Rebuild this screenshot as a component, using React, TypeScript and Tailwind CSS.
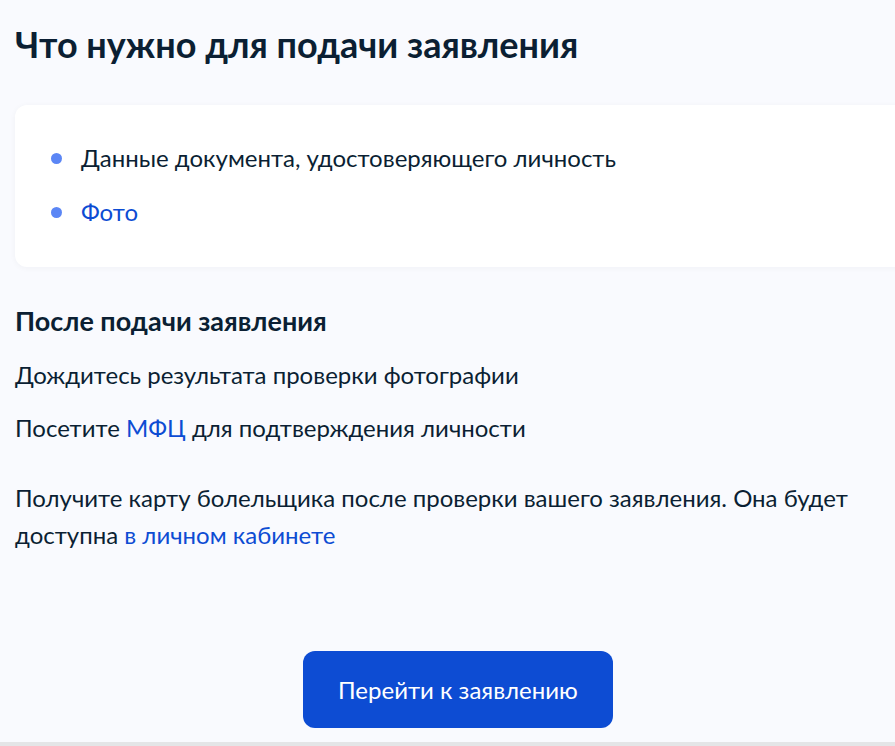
const items = [
  { text: "Данные документа, удостоверяющего личность", link: false },
  { text: "Фото", link: true },
];

export default function App() {
  return (
    <div
      className="w-[895px] h-[746px] overflow-hidden bg-[#f9fafe] text-[#0b1f33] flex flex-col"
      style={{ fontFamily: "Lato, 'Noto Sans', sans-serif" }}
    >
      <div className="flex-1 px-[15px]">
        <h2 className="pt-[22px] text-[36px] leading-[44px] font-bold">
          Что нужно для подачи заявления
        </h2>

        <div className="mt-[39px] w-[920px] bg-white rounded-xl shadow-[0_1px_6px_rgba(11,31,51,0.04)] pt-[38px] pb-[40px] pl-[36px]">
          <ul className="flex flex-col gap-6">
            {items.map((item) => (
              <li key={item.text} className="flex items-center gap-[19px] text-[24px] leading-[30px]">
                <span className="w-[11px] h-[11px] rounded-full bg-[#5b86f5] shrink-0" />
                <span className={item.link ? "text-[#0d4cd3]" : ""}>{item.text}</span>
              </li>
            ))}
          </ul>
        </div>

        <h3 className="mt-10 text-[27px] leading-[28px] font-bold">После подачи заявления</h3>
        <p className="mt-[25px] text-[24px] leading-[30px]">Дождитесь результата проверки фотографии</p>
        <p className="mt-[23px] text-[24px] leading-[30px]">
          Посетите <span className="text-[#0d4cd3]">МФЦ</span> для подтверждения личности
        </p>
        <p className="mt-[36px] text-[24px] leading-[37px] w-[865px]">
          Получите карту болельщика после проверки вашего заявления. Она будет доступна{" "}
          <span className="text-[#0d4cd3]">в личном кабинете</span>
        </p>

        <div className="mt-[98px] flex justify-center">
          <button className="w-[310px] h-[77px] rounded-xl bg-[#0d4cd3] text-white text-[24px] ml-[21px]">
            Перейти к заявлению
          </button>
        </div>
      </div>
      <div className="h-[4px] bg-[#e4e5e7]" />
    </div>
  );
}
